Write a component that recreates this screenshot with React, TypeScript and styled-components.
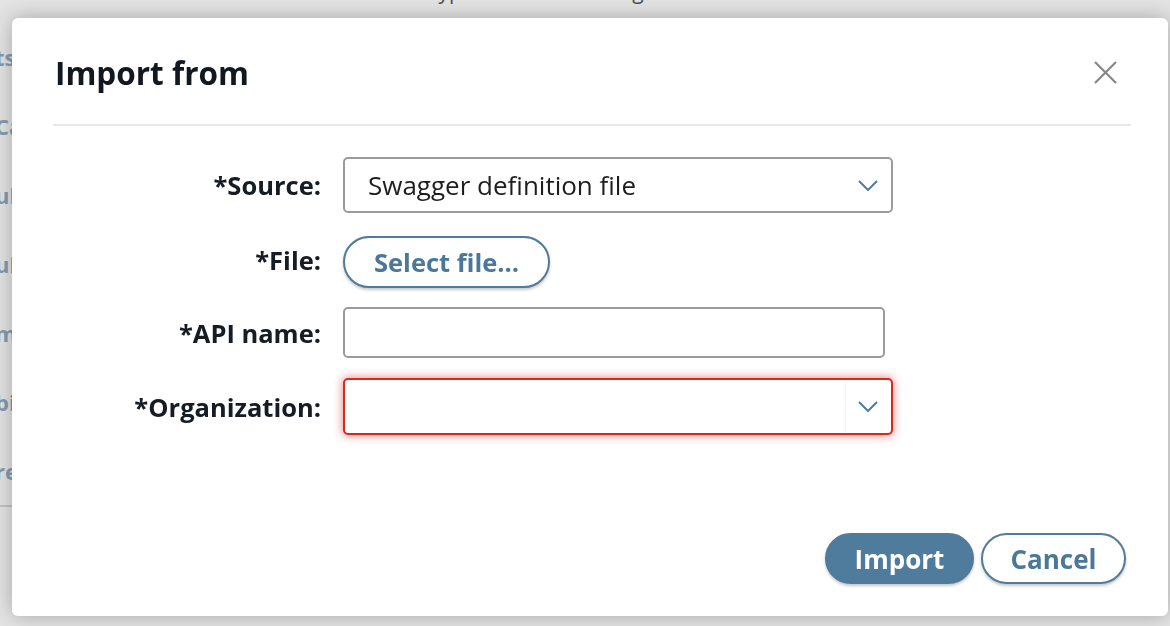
import { FunctionComponent } from "react";
import styled, { createGlobalStyle } from "styled-components";

const GlobalStyle = createGlobalStyle`
  html, body {
    margin: 0;
    padding: 0;
    width: 100%;
    height: 100%;
    overflow: hidden;
    background: #ffffff;
    font-family: "Open Sans", "Liberation Sans", sans-serif;
  }
`;

const Page = styled.div`
  width: 1170px;
  height: 626px;
  background: #f5f5f5;
  overflow: hidden;
`;
const PageTitle = styled.div`
  margin-top: -22px;
  padding-left: 330px;
  font-size: 21px;
  line-height: 26px;
  color: #555555;
  white-space: nowrap;
`;
const SideNav = styled.ul`
  list-style: none;
  margin: 18px 0 0 0;
  padding: 0;
  width: 240px;
  border-bottom: 2px solid #d3d3d3;
`;
const SideItem = styled.li`
  height: 69px;
  display: flex;
  align-items: center;
  margin-left: -5px;
  font-size: 22px;
  font-weight: 700;
  color: #8ea8bf;
  white-space: nowrap;
`;

const Backdrop = styled.div`
  position: fixed;
  inset: 0;
  background: rgba(0, 0, 0, 0.07);
  display: flex;
  padding: 18px 2px 10px 12px;
  box-sizing: border-box;
`;
const Modal = styled.div`
  flex: 1;
  background: #ffffff;
  border-radius: 6px;
  box-shadow: 0 0 22px rgba(0, 0, 0, 0.28);
  display: flex;
  flex-direction: column;
`;
const Header = styled.div`
  display: flex;
  align-items: center;
  justify-content: space-between;
  padding: 33px 51px 30px 43px;
`;
const Title = styled.h2`
  margin: 0;
  font-size: 31.5px;
  line-height: 43px;
  font-weight: 700;
  color: #121820;
`;
const CloseButton = styled.button`
  width: 24px;
  height: 24px;
  padding: 0;
  border: none;
  background: none;
  cursor: pointer;
  display: flex;
  align-items: center;
  justify-content: center;
`;
const Divider = styled.hr`
  margin: 0 37px 0 41px;
  border: none;
  height: 2px;
  background: #e6e7e8;
`;
const Form = styled.div`
  display: grid;
  grid-template-columns: 268px auto;
  column-gap: 22px;
  row-gap: 20px;
  align-items: center;
  justify-items: start;
  padding: 31px 0 0 41px;
`;
const Label = styled.label`
  justify-self: end;
  font-size: 25.5px;
  font-weight: 700;
  color: #161c24;
  white-space: nowrap;
`;
const SelectBox = styled.div<{ $invalid?: boolean }>`
  box-sizing: border-box;
  width: 550px;
  height: ${(p) => (p.$invalid ? "57px" : "56px")};
  border: 2px solid ${(p) => (p.$invalid ? "#d9291f" : "#9b9b9b")};
  border-radius: 5px;
  box-shadow: ${(p) => (p.$invalid ? "0 0 8px 1px rgba(217, 41, 31, 0.5)" : "none")};
  display: flex;
  align-items: center;
  font-size: 26px;
  color: #1e1e1e;
  background: #ffffff;
  overflow: hidden;
`;
const SelectValue = styled.div`
  flex: 1;
  align-self: stretch;
  display: flex;
  align-items: center;
  padding-left: 23px;
`;
const SelectArrow = styled.div<{ $divided?: boolean }>`
  width: 43px;
  align-self: stretch;
  display: flex;
  align-items: center;
  justify-content: center;
  padding-right: 2px;
  border-left: 1px solid ${(p) => (p.$divided ? "#f4f4f4" : "transparent")};
`;
const TextInput = styled.input`
  box-sizing: border-box;
  width: 542px;
  height: 51px;
  border: 2px solid #9b9b9b;
  border-radius: 5px;
  font-size: 26px;
  font-family: inherit;
  padding: 0 20px;
  outline: none;
`;
const PillButton = styled.button<{ $primary?: boolean }>`
  box-sizing: border-box;
  height: 51px;
  padding: 0 24px;
  border-radius: 26px;
  border: 2px solid #4f7c9c;
  background: ${(p) => (p.$primary ? "#4f7c9c" : "#ffffff")};
  color: ${(p) => (p.$primary ? "#ffffff" : "#4b7899")};
  font-family: inherit;
  font-size: 26px;
  font-weight: 700;
  cursor: pointer;
  box-shadow: 0 2px 3px rgba(0, 0, 0, 0.22);
`;
const FileButton = styled(PillButton)`
  height: 52px;
  margin: 3px 0 -1px;
  padding: 0 29px;
  font-size: 25.5px;
`;
const Footer = styled.div`
  margin-top: auto;
  display: flex;
  justify-content: flex-end;
  gap: 7px;
  padding: 0 42px 32px 0;
`;
const ImportButton = styled(PillButton)`
  width: 149px;
`;
const CancelButton = styled(PillButton)`
  width: 145px;
`;

const Chevron: FunctionComponent = () => (
  <svg width="20" height="11" viewBox="0 0 20 11">
    <polyline points="1,1 10,10 19,1" fill="none" stroke="#4f7c9c" strokeWidth="2" />
  </svg>
);

const App: FunctionComponent = () => {
  const navItems = ["ts", "Ca", "ub", "ub", "mp", "bi", "re"];
  return (
    <>
      <GlobalStyle />
      <Page>
        <PageTitle>Select the type of API and configure it</PageTitle>
        <SideNav>
          {navItems.map((item, i) => (
            <SideItem key={i}>{item}</SideItem>
          ))}
        </SideNav>
      </Page>
      <Backdrop>
        <Modal>
          <Header>
            <Title>Import from</Title>
            <CloseButton aria-label="Close">
              <svg width="23" height="23" viewBox="0 0 23 23">
                <path d="M1 1 L22 22 M22 1 L1 22" stroke="#878787" strokeWidth="2.2" />
              </svg>
            </CloseButton>
          </Header>
          <Divider />
          <Form>
            <Label>*Source:</Label>
            <SelectBox>
              <SelectValue>Swagger definition file</SelectValue>
              <SelectArrow>
                <Chevron />
              </SelectArrow>
            </SelectBox>
            <Label>*File:</Label>
            <FileButton>Select file...</FileButton>
            <Label>*API name:</Label>
            <TextInput />
            <Label>*Organization:</Label>
            <SelectBox $invalid>
              <SelectValue />
              <SelectArrow $divided>
                <Chevron />
              </SelectArrow>
            </SelectBox>
          </Form>
          <Footer>
            <ImportButton $primary>Import</ImportButton>
            <CancelButton>Cancel</CancelButton>
          </Footer>
        </Modal>
      </Backdrop>
    </>
  );
};

export default App;
